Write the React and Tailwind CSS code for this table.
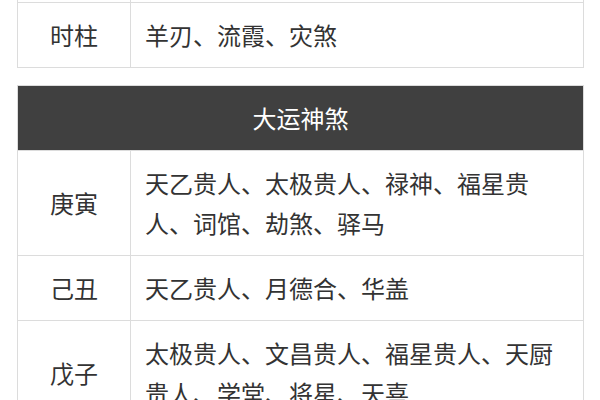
const ROWS = [
    { k: '庚寅', v: '天乙贵人、太极贵人、禄神、福星贵人、词馆、劫煞、驿马' },
    { k: '己丑', v: '天乙贵人、月德合、华盖' },
    { k: '戊子', v: '太极贵人、文昌贵人、福星贵人、天厨贵人、学堂、将星、天喜' },
]

const font = { fontFamily: '"Noto Sans CJK SC", "Noto Sans", sans-serif' }

function Row({ k, v }) {
    return (
        <tr className="border-t border-[#dcdcdc]">
            <td className="w-[113px] border-r border-[#dcdcdc] text-center py-3 leading-[40px]">{k}</td>
            <td className="pl-[14px] pr-[28px] py-3 leading-[40px]">{v}</td>
        </tr>
    )
}

export default function App() {
    return (
        <div className="w-[600px] h-[400px] overflow-hidden bg-white text-[24px] text-[#333]" style={font}>
            {/* 上一张表的末尾，上一行只露出边线 */}
            <table className="ml-[17px] mt-[-63px] w-[567px] border-collapse border border-[#dcdcdc]">
                <tbody>
                    <tr>
                        <td className="w-[113px] h-[65px] border-r border-[#dcdcdc]"></td>
                        <td></td>
                    </tr>
                    <Row k="时柱" v="羊刃、流霞、灾煞" />
                </tbody>
            </table>

            <table className="ml-[17px] mt-[17px] w-[567px] border-collapse border border-[#dcdcdc]">
                <thead>
                    <tr>
                        <th colSpan={2} className="bg-[#404040] text-white font-normal text-center py-3 leading-[40px]">大运神煞</th>
                    </tr>
                </thead>
                <tbody>
                    {ROWS.map((r) => <Row key={r.k} {...r} />)}
                </tbody>
            </table>
        </div>
    )
}
